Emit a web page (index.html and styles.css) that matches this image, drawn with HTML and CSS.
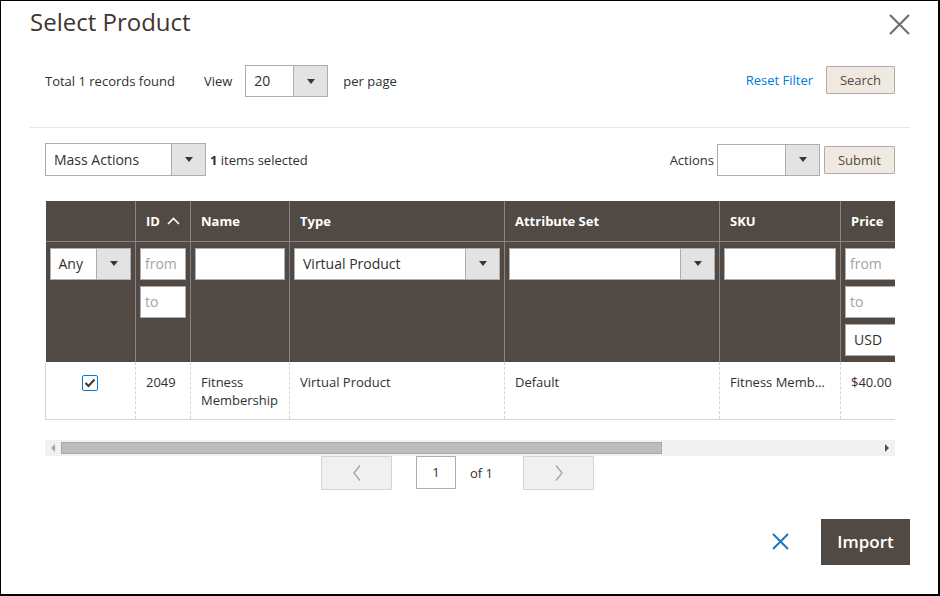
FILE: index.html
```html
<!DOCTYPE html>
<html lang="en">
<head>
<meta charset="utf-8">
<title>Select Product</title>
<link rel="stylesheet" href="styles.css">
</head>
<body>
<div class="modal">
  <header class="modal-head">
    <h1 class="title">Select Product</h1>
    <button class="close" type="button" aria-label="Close">
      <svg width="21" height="21" viewBox="0 0 21 21"><path d="M1 1L20 20M20 1L1 20" stroke="#6f6a66" stroke-width="2" fill="none"/></svg>
    </button>
  </header>

  <div class="toolbar top">
    <div class="group">
      <span class="records">Total 1 records found</span>
      <span class="view">View</span>
      <div class="select sel-view"><span class="select-value">20</span><span class="select-btn"><i class="caret"></i></span></div>
      <span class="perpage">per page</span>
    </div>
    <div class="group">
      <a class="link">Reset Filter</a>
      <button class="btn btn-search" type="button">Search</button>
    </div>
  </div>

  <div class="divider"></div>

  <div class="toolbar mass">
    <div class="group">
      <div class="select sel-mass"><span class="select-value">Mass Actions</span><span class="select-btn"><i class="caret"></i></span></div>
      <span class="selected"><b>1</b> items selected</span>
    </div>
    <div class="group">
      <span class="actions-label">Actions</span>
      <div class="select sel-actions"><span class="select-value"></span><span class="select-btn"><i class="caret"></i></span></div>
      <button class="btn btn-submit" type="button">Submit</button>
    </div>
  </div>

  <div class="grid-wrap">
    <div class="grid-scroll">
      <table class="grid">
        <colgroup>
          <col class="w-check"><col class="w-id"><col class="w-name"><col class="w-type"><col class="w-attr"><col class="w-sku"><col class="w-price">
        </colgroup>
        <thead>
          <tr class="head">
            <th></th>
            <th class="th-id">ID <svg class="sort" width="13" height="8" viewBox="0 0 13 8"><path d="M1 7L6.5 1.5L12 7" stroke="#fff" stroke-width="1.6" fill="none"/></svg></th>
            <th>Name</th>
            <th>Type</th>
            <th>Attribute Set</th>
            <th>SKU</th>
            <th>Price</th>
          </tr>
          <tr class="filters">
            <td><div class="select sel-any"><span class="select-value">Any</span><span class="select-btn"><i class="caret"></i></span></div></td>
            <td><div class="stack"><span class="input ph">from</span><span class="input ph">to</span></div></td>
            <td><span class="input"></span></td>
            <td><div class="select"><span class="select-value">Virtual Product</span><span class="select-btn"><i class="caret"></i></span></div></td>
            <td><div class="select"><span class="select-value"></span><span class="select-btn"><i class="caret"></i></span></div></td>
            <td><span class="input"></span></td>
            <td><div class="stack price-stack"><span class="input ph">from</span><span class="input ph">to</span><div class="select"><span class="select-value">USD</span><span class="select-btn"><i class="caret"></i></span></div></div></td>
          </tr>
        </thead>
        <tbody>
          <tr class="row">
            <td class="td-check"><span class="checkbox"><svg width="12" height="10" viewBox="0 0 12 10"><path d="M1.5 5L4.5 8L10.5 1.5" stroke="#41362f" stroke-width="2" fill="none"/></svg></span></td>
            <td>2049</td>
            <td>Fitness Membership</td>
            <td>Virtual Product</td>
            <td>Default</td>
            <td class="ellipsis">Fitness Membership</td>
            <td>$40.00</td>
          </tr>
        </tbody>
      </table>
    </div>
    <div class="hscroll">
      <span class="arr arr-left"></span>
      <span class="track"><span class="thumb"></span></span>
      <span class="arr arr-right"></span>
    </div>
    <div class="pager">
      <button class="page-btn" type="button" aria-label="Previous"><svg width="10" height="18" viewBox="0 0 10 18"><path d="M8 1.5L2 9L8 16.5" stroke="#a6a6a6" stroke-width="1.4" fill="none"/></svg></button>
      <span class="page-input">1</span>
      <span class="page-of">of 1</span>
      <button class="page-btn" type="button" aria-label="Next"><svg width="10" height="18" viewBox="0 0 10 18"><path d="M2 1.5L8 9L2 16.5" stroke="#a6a6a6" stroke-width="1.4" fill="none"/></svg></button>
    </div>
  </div>

  <footer class="modal-foot">
    <button class="cancel" type="button" aria-label="Cancel">
      <svg width="17" height="17" viewBox="0 0 17 17"><path d="M1 1L16 16M16 1L1 16" stroke="#1979c3" stroke-width="2" fill="none"/></svg>
    </button>
    <button class="btn-import" type="button">Import</button>
  </footer>
</div>
</body>
</html>
```

FILE: styles.css
```css
* { box-sizing: border-box; }
html, body { margin: 0; padding: 0; }
body {
  width: 940px;
  height: 596px;
  overflow: hidden;
  background: #fff;
  font-family: "Open Sans", "Liberation Sans", sans-serif;
  font-size: 13px;
  color: #303030;
}
button { font-family: inherit; cursor: pointer; }

.modal {
  width: 940px;
  height: 596px;
  border: 1px solid #000;
  border-right-width: 2px;
  border-bottom-width: 2px;
  padding: 0 28px 0 29px;
  display: flex;
  flex-direction: column;
}

.modal-head {
  display: flex;
  justify-content: space-between;
  align-items: flex-start;
  height: 64px;
  padding-top: 3px;
}
.title {
  margin: 0;
  font-size: 24px;
  font-weight: 400;
  line-height: 36px;
  color: #41362f;
}
.close {
  margin-top: 10px;
  width: 21px;
  height: 21px;
  padding: 0;
  border: 0;
  background: none;
  display: block;
}
.close svg { display: block; }

.toolbar {
  display: flex;
  justify-content: space-between;
  align-items: center;
  padding: 0 15px;
}
.toolbar.top { height: 32px; }
.toolbar.mass { height: 33px; margin-top: 15px; }
.group { display: flex; align-items: center; }

.records { margin-right: 29px; }
.view { margin-right: 13px; }
.perpage { margin-left: 15px; }
.link { color: #007bdb; margin-right: 13px; margin-top: -2px; }

.select {
  display: flex;
  height: 32px;
  border: 1px solid #adadad;
  background: #fff;
  width: 100%;
}
.select-value {
  flex: 1;
  min-width: 0;
  padding: 0 8px;
  line-height: 30px;
  font-size: 14px;
  color: #303030;
  white-space: nowrap;
  overflow: hidden;
}
.select-btn {
  flex: none;
  width: 34px;
  background: #e3e3e3;
  border-left: 1px solid #adadad;
  display: flex;
  align-items: center;
  justify-content: center;
}
.caret {
  width: 0;
  height: 0;
  border-top: 5px solid #41362f;
  border-left: 4px solid transparent;
  border-right: 4px solid transparent;
}
.sel-view { width: 83px; }
.sel-mass { width: 161px; height: 33px; }
.sel-mass .select-value { line-height: 31px; }
.sel-actions { width: 103px; height: 32px; margin-left: 3px; }
.selected { margin-left: 4px; }
.selected b { font-weight: 700; }

.btn {
  height: 28px;
  border: 1px solid #adadad;
  background: #efe9df;
  color: #514943;
  font-size: 13px;
  padding: 0;
  border-radius: 1px;
}
.btn-search { width: 69px; margin-top: -2px; }
.btn-submit { width: 71px; margin-left: 4px; }

.divider {
  height: 1px;
  background: #ece7e3;
  margin-top: 30px;
}

.grid-wrap { padding: 0 15px; margin-top: 25px; }
.grid-scroll { width: 850px; overflow: hidden; }

.grid {
  border-collapse: collapse;
  table-layout: fixed;
  width: 1157px;
}
.w-check { width: 90px; }
.w-id { width: 55px; }
.w-name { width: 99px; }
.w-type { width: 215px; }
.w-attr { width: 215px; }
.w-sku { width: 121px; }
.w-price { width: 362px; }

.head th {
  height: 40px;
  background: #514943;
  color: #fff;
  font-weight: 700;
  text-align: left;
  padding: 0 10px;
  border-left: 1px solid #8a837f;
  white-space: nowrap;
}
.head th:first-child { border-left: 0; }
.sort { margin-left: 4px; vertical-align: 1px; }

.filters td {
  height: 121px;
  background: #514943;
  vertical-align: top;
  padding: 6px 4px 0;
  border-left: 1px solid #8a837f;
  border-top: 1px solid #8a837f;
}
.filters td:first-child { border-left: 0; }
.stack { display: flex; flex-direction: column; gap: 6px; }
.price-stack { width: 122px; }
.input {
  display: block;
  height: 32px;
  border: 1px solid #adadad;
  background: #fff;
  padding: 0 4px;
  line-height: 30px;
  font-size: 14px;
  color: #303030;
}
.input.ph { color: #a3a3a3; }

.row td {
  height: 57px;
  vertical-align: top;
  padding: 11px 10px 9px;
  line-height: 18px;
  border-left: 1px dashed #d6d6d6;
  border-bottom: 1px solid #d6d6d6;
  color: #303030;
}
.row td:first-child { border-left: 1px solid #d6d6d6; }
.td-check { text-align: center; }
.checkbox {
  display: inline-flex;
  align-items: center;
  justify-content: center;
  width: 16px;
  height: 16px;
  margin-top: 2px;
  margin-left: -2px;
  border: 1px solid #007bdb;
  border-radius: 2px;
  background: #fff;
  vertical-align: top;
}
.checkbox svg { display: block; }
.ellipsis { white-space: nowrap; overflow: hidden; text-overflow: ellipsis; }

.hscroll {
  margin-top: 20px;
  height: 16px;
  width: 850px;
  background: #f1f1f1;
  display: flex;
  align-items: center;
}
.arr { flex: none; width: 16px; height: 16px; display: flex; align-items: center; justify-content: center; }
.arr-left::before {
  content: "";
  border-right: 4px solid #a3a3a3;
  border-top: 4px solid transparent;
  border-bottom: 4px solid transparent;
}
.arr-right::before {
  content: "";
  border-left: 4px solid #505050;
  border-top: 4px solid transparent;
  border-bottom: 4px solid transparent;
}
.track { flex: 1; height: 16px; display: flex; align-items: center; }
.thumb {
  display: block;
  width: 601px;
  height: 12px;
  background: #bcbcbc;
  border: 1px solid #a8a8a8;
}

.pager {
  display: flex;
  align-items: center;
  padding-left: 276px;
}
.page-btn {
  width: 71px;
  height: 34px;
  background: #f0f0f0;
  border: 1px solid #d4d4d4;
  display: flex;
  align-items: center;
  justify-content: center;
  padding: 0;
}
.page-btn svg { display: block; }
.page-input {
  margin-left: 24px;
  width: 40px;
  height: 33px;
  border: 1px solid #adadad;
  text-align: center;
  line-height: 31px;
  font-size: 13px;
  color: #303030;
}
.page-of { margin-left: 14px; margin-right: 30px; }

.modal-foot {
  margin-top: 29px;
  display: flex;
  justify-content: flex-end;
  align-items: center;
}
.cancel {
  border: 0;
  background: none;
  padding: 0;
  width: 17px;
  height: 17px;
  margin-right: 32px;
}
.cancel svg { display: block; }
.btn-import {
  width: 89px;
  height: 46px;
  border: 0;
  background: #514943;
  color: #fff;
  font-size: 17px;
  font-weight: 600;
  padding: 0;
}
```
